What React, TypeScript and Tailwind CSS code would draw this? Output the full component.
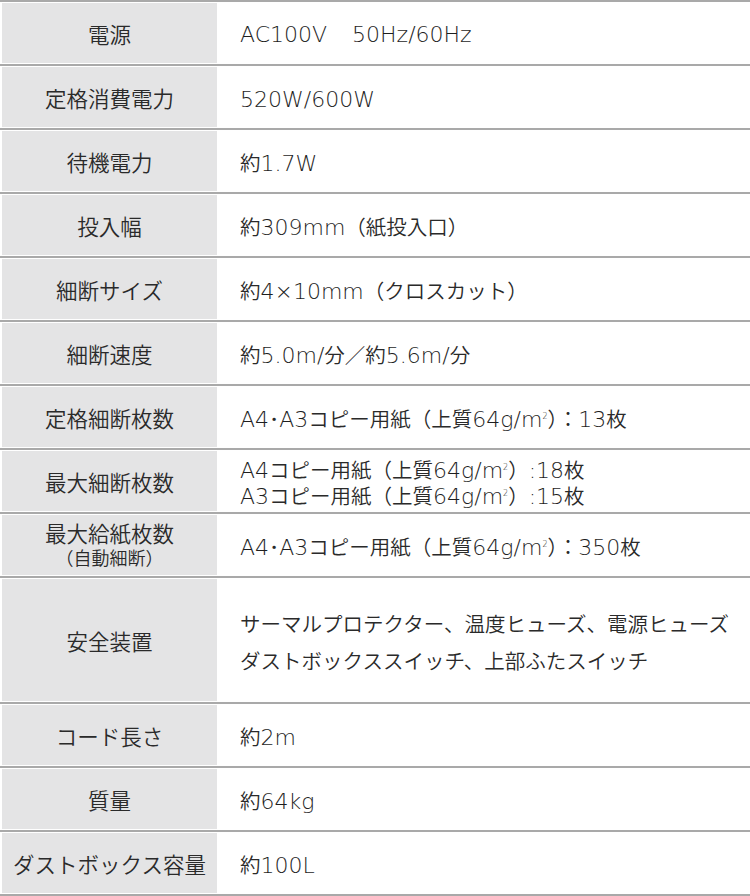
import React from "react";

const LATIN = /([A-Za-z0-9.\/:×]+|㎡)/;
const latinCls = "font-['DejaVu_Sans'] font-light text-[22px] text-[#1e1e1e]";

// 和文は Noto、英数字だけ幅の広い DejaVu に振り分ける
function Txt({ s }: { s: string }) {
  return (
    <>
      {s.split(LATIN).map((p, i) => {
        if (!p) return null;
        if (p === "㎡")
          return (
            <span key={i} className={latinCls}>
              m<sup className="text-[8px] relative -top-[0.9em] align-baseline">2</sup>
            </span>
          );
        if (/^[A-Za-z0-9.\/:×]+$/.test(p))
          return (
            <span key={i} className={latinCls}>
              {p}
            </span>
          );
        return <span key={i}>{p}</span>;
      })}
    </>
  );
}

type Spec = {
  label: React.ReactNode;
  value: string[];
  tall?: boolean;
};

const specs: Spec[] = [
  { label: "電源", value: ["AC100V", "50Hz/60Hz"] },
  { label: "定格消費電力", value: ["520W/600W"] },
  { label: "待機電力", value: ["約1.7W"] },
  { label: "投入幅", value: ["約309mm（紙投入口）"] },
  { label: "細断サイズ", value: ["約4×10mm（クロスカット）"] },
  { label: "細断速度", value: ["約5.0m/分／約5.6m/分"] },
  { label: "定格細断枚数", value: ["A4･A3コピー用紙（上質64g/㎡）：13枚"] },
  { label: "最大細断枚数", value: ["A4コピー用紙（上質64g/㎡）:18枚", "A3コピー用紙（上質64g/㎡）:15枚"] },
  {
    label: (
      <div className="flex flex-col items-center leading-[24px] -mt-[4px]">
        <span>最大給紙枚数</span>
        <span className="text-[18px]">（自動細断）</span>
      </div>
    ),
    value: ["A4･A3コピー用紙（上質64g/㎡）：350枚"],
  },
  {
    label: "安全装置",
    value: ["サーマルプロテクター、温度ヒューズ、電源ヒューズ", "ダストボックススイッチ、上部ふたスイッチ"],
    tall: true,
  },
  { label: "コード長さ", value: ["約2m"] },
  { label: "質量", value: ["約64kg"] },
  { label: "ダストボックス容量", value: ["約100L"] },
];

export default function App() {
  return (
    <div
      className="w-[750px] h-[896px] bg-white text-[#2a2a2a] overflow-hidden font-[350]"
      style={{ fontFamily: '"Noto Sans CJK JP", "Noto Sans", sans-serif' }}
    >
      <div className="border-b-2 border-[#a9a9a9]">
        {specs.map((s, i) => (
          <div key={i} className="flex border-t-2 border-[#a9a9a9] py-px pl-[2px]">
            <div
              className={`w-[215px] shrink-0 bg-[#e4e4e5] flex items-center justify-center pt-[3px] text-[21.5px] ${
                s.tall ? "h-[122px]" : "h-[60px]"
              }`}
            >
              {s.label}
            </div>
            <div className="flex-1 flex items-center pl-[23px] pt-[3px] text-[20.5px]">
              {i === 0 ? (
                <div>
                  <Txt s={s.value[0]} />
                  <span className="inline-block w-[25px]" />
                  <Txt s={s.value[1]} />
                </div>
              ) : (
                <div className={s.tall ? "leading-[37px]" : "leading-[24px]"}>
                  {s.value.map((v, j) => (
                    <div key={j}>
                      <Txt s={v} />
                    </div>
                  ))}
                </div>
              )}
            </div>
          </div>
        ))}
      </div>
    </div>
  );
}
